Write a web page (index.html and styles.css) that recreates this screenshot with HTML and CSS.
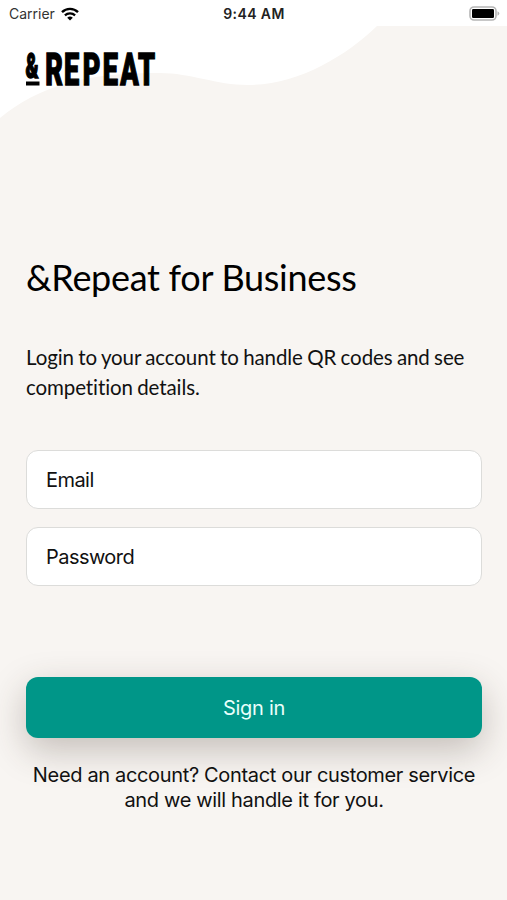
FILE: index.html
```html
<!DOCTYPE html>
<html lang="en">
<head>
    <meta charset="UTF-8">
    <meta name="viewport" content="width=device-width, initial-scale=1.0">
    <title>&amp;Repeat for Business</title>
    <link rel="stylesheet" href="styles.css">
</head>
<body>
    <div class="status-bar">
        <div class="carrier">
            <span>Carrier</span>
            <svg class="wifi" width="18" height="14" viewBox="0 0 18 14">
                <path d="M1 5.2a11.4 11.4 0 0 1 16 0" fill="none" stroke="#000" stroke-width="2.4"/>
                <path d="M3.9 8.4a7.3 7.3 0 0 1 10.2 0" fill="none" stroke="#000" stroke-width="2.2"/>
                <path d="M9 13.6L6.2 10.8a4 4 0 0 1 5.6 0z"/>
            </svg>
        </div>
        <div class="time">9:44 AM</div>
        <svg class="battery" width="31" height="15" viewBox="0 0 31 15">
            <rect x="1" y="1" width="26" height="13" rx="4" fill="#fff" stroke="#b5b5b5" stroke-width="1.6"/>
            <rect x="3" y="3" width="22" height="9" rx="1.2"/>
            <path d="M28.5 5.2q1.8 .8 1.8 2.3t-1.8 2.3z" fill="#b5b5b5"/>
        </svg>
    </div>

    <div class="header">
        <svg class="wave" width="507" height="94" viewBox="0 0 507 94">
            <path d="M0 0H377C345 31 297 59 248 59C216 59 191 47 160 47C90 46 40 59 0 92Z" fill="#fff"/>
        </svg>
        <svg class="logo" width="130" height="36" viewBox="0 0 130 36">
            <text class="logo-amp" transform="scale(0.55 1)" x="1" y="26">&amp;</text>
            <rect x="1" y="29.5" width="13.5" height="4"/>
            <text class="logo-name" transform="scale(0.61 1)" x="33.3 63.9 94.8 127.5 156.2 185.2" y="33">REPEAT</text>
        </svg>
    </div>

    <div class="container">
        <h1>&amp;Repeat for Business</h1>
        <p class="intro">Login to your account to handle QR codes and see competition details.</p>

        <form id="loginForm">
            <input type="email" name="email" placeholder="Email">
            <input type="password" name="password" placeholder="Password">
            <button type="submit">Sign in</button>
        </form>

        <p class="contact">Need an account? Contact our customer service and we will handle it for you.</p>
    </div>
</body>
</html>
```
FILE: styles.css
```css
* {
    box-sizing: border-box;
}

body {
    margin: 0;
    height: 900px;
    overflow: hidden;
    background-color: #f8f5f2;
    color: #111;
    font-family: Inter, "Liberation Sans", sans-serif;
}

.status-bar {
    display: grid;
    grid-template-columns: 1fr auto 1fr;
    align-items: center;
    height: 26px;
    padding: 1px 7px 0 8px;
    background-color: #fff;
    font-size: 14px;
}

.carrier {
    display: flex;
    align-items: center;
    gap: 6px;
    padding-left: 1px;
    color: #333;
}

.time {
    font-weight: 600;
    letter-spacing: 0.4px;
    color: #222;
}

.battery {
    justify-self: end;
}

.header {
    position: relative;
    height: 94px;
    padding: 26px 25px;
}

.wave {
    position: absolute;
    top: 0;
    left: 0;
}

.logo {
    position: relative;
    display: block;
    overflow: visible;
}

.logo-amp,
.logo-name {
    font-family: Roboto, sans-serif;
    font-weight: 900;
    stroke: #000;
    stroke-width: 1.4px;
}

.logo-amp {
    font-size: 35.5px;
}

.logo-name {
    font-size: 44.5px;
}

.container {
    padding: 133px 25px 0 26px;
}

h1 {
    margin: 0;
    font-family: Lato, sans-serif;
    font-size: 36px;
    font-weight: 400;
    line-height: 48px;
    letter-spacing: -0.3px;
    color: #000;
}

.intro {
    margin: 42px 0 48px;
    font-family: Lato, sans-serif;
    font-size: 20.5px;
    line-height: 29.5px;
    letter-spacing: -0.1px;
    word-spacing: -0.75px;
}

form {
    display: flex;
    flex-direction: column;
}

input {
    height: 59px;
    margin-bottom: 18px;
    padding: 0 19px;
    border: 1px solid #dcdcda;
    border-radius: 12px;
    background-color: #fff;
    font-family: inherit;
    font-size: 20px;
    letter-spacing: -0.55px;
}

input::placeholder {
    color: #111;
    opacity: 1;
}

button {
    height: 61px;
    margin-top: 73px;
    border: none;
    border-radius: 12px;
    background-color: #009688;
    box-shadow: 0 12px 36px rgba(60, 45, 35, 0.28);
    color: #e8fffb;
    font-family: inherit;
    font-size: 20px;
    letter-spacing: -0.3px;
}

.contact {
    margin: 25px 0 0;
    font-size: 20px;
    line-height: 25px;
    letter-spacing: -0.34px;
    text-align: center;
}
```
